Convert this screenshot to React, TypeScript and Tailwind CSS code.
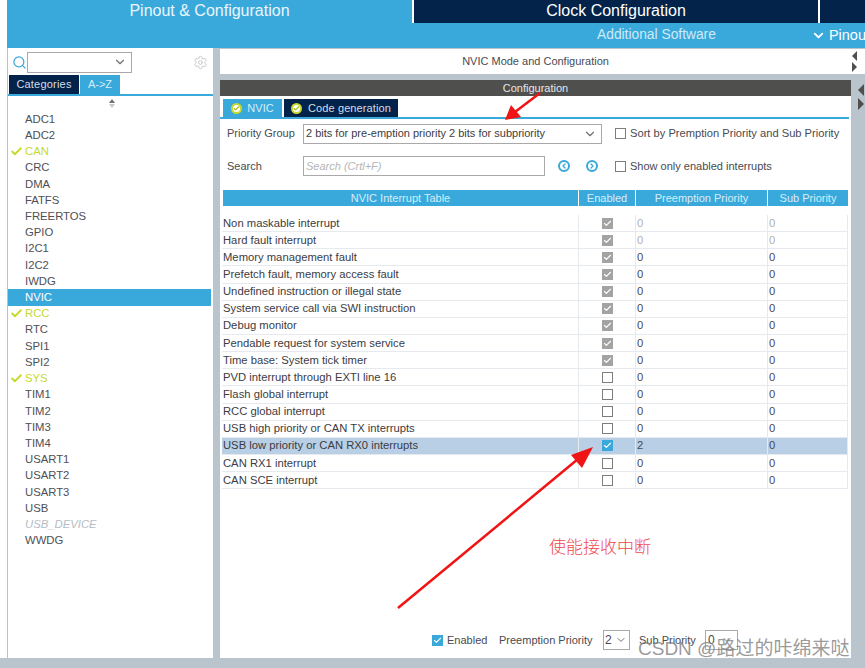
import { ChevronDown, Check, Search, Settings } from "lucide-react";

const peripherals = [
  { name: "ADC1" }, { name: "ADC2" }, { name: "CAN", on: true }, { name: "CRC" }, { name: "DMA" },
  { name: "FATFS" }, { name: "FREERTOS" }, { name: "GPIO" }, { name: "I2C1" }, { name: "I2C2" },
  { name: "IWDG" }, { name: "NVIC", active: true }, { name: "RCC", on: true }, { name: "RTC" },
  { name: "SPI1" }, { name: "SPI2" }, { name: "SYS", on: true }, { name: "TIM1" }, { name: "TIM2" },
  { name: "TIM3" }, { name: "TIM4" }, { name: "USART1" }, { name: "USART2" }, { name: "USART3" },
  { name: "USB" }, { name: "USB_DEVICE", disabled: true }, { name: "WWDG" },
];

const interrupts = [
  { name: "Non maskable interrupt", locked: true, fixed: true },
  { name: "Hard fault interrupt", locked: true, fixed: true },
  { name: "Memory management fault", locked: true },
  { name: "Prefetch fault, memory access fault", locked: true },
  { name: "Undefined instruction or illegal state", locked: true },
  { name: "System service call via SWI instruction", locked: true },
  { name: "Debug monitor", locked: true },
  { name: "Pendable request for system service", locked: true },
  { name: "Time base: System tick timer", locked: true },
  { name: "PVD interrupt through EXTI line 16" },
  { name: "Flash global interrupt" },
  { name: "RCC global interrupt" },
  { name: "USB high priority or CAN TX interrupts" },
  { name: "USB low priority or CAN RX0 interrupts", selected: true },
  { name: "CAN RX1 interrupt" },
  { name: "CAN SCE interrupt" },
];

function Box({ state }: { state: "off" | "on" | "locked" }) {
  if (state === "off") return <span className="block w-[11px] h-[11px] border border-[#7d7d7d] bg-white" />;
  return (
    <span className={`flex items-center justify-center w-[11px] h-[11px] ${state === "on" ? "bg-[#39a9dc]" : "bg-[#a3a3a3]"}`}>
      <Check size={9} strokeWidth={3} className="text-white" />
    </span>
  );
}

function TabDot() {
  return (
    <span className="flex items-center justify-center w-[11px] h-[11px] rounded-full bg-white border-2 border-[#c6d92e]">
      <Check size={7} strokeWidth={4} className="text-[#a8bc14]" />
    </span>
  );
}

function Sidebar() {
  return (
    <div className="w-[205px] ml-px bg-white flex flex-col shrink-0">
      <div className="flex items-center h-[24px] mt-[2px] pl-[4px] pr-[5px]">
        <Search size={15} strokeWidth={2} className="text-[#39a9dc]" />
        <div className="w-[105px] h-[21px] border border-[#a9a9a9] flex items-center justify-end pr-[4px]">
          <ChevronDown size={14} className="text-[#707070]" />
        </div>
        <Settings size={15} strokeWidth={1.5} className="ml-auto text-[#c4c4c4]" />
      </div>
      <div className="flex h-[19px] mt-[1px] pl-px gap-px border-b-2 border-[#39a9dc] box-content">
        <div className="w-[70px] bg-[#03234b] text-[#d5dde5] text-[11px] tracking-[0.2px] flex items-center justify-center">Categories</div>
        <div className="w-[40px] bg-[#39a9dc] text-[#d5eefa] text-[11px] flex items-center justify-center">A-&gt;Z</div>
      </div>
      <div className="h-[14px] flex flex-col items-center justify-center pl-[2px] gap-px">
        <span className="w-0 h-0 border-x-[3px] border-x-transparent border-b-[4px] border-b-[#707070]" />
        <span className="w-0 h-0 border-x-[3px] border-x-transparent border-t-[4px] border-t-[#c8c8c8]" />
      </div>
      <div className="mt-px mr-[2px]">
        {peripherals.map((p) => (
          <div
            key={p.name}
            className={`h-[16.23px] flex items-center pl-[17px] text-[11.3px] ${
              p.active ? "bg-[#39a9dc] text-white" : p.on ? "text-[#c6d92e]" : p.disabled ? "text-[#b5bcc4] italic" : "text-[#4f4f55]"
            }`}
          >
            {p.on && <Check size={13} strokeWidth={3.5} className="text-[#c6d92e] -ml-[15px] mr-[2px] shrink-0" />}
            <span>{p.name}</span>
          </div>
        ))}
      </div>
    </div>
  );
}

function ConfigPanel() {
  return (
    <div className="flex-1 flex flex-col bg-white text-[11px] text-[#4a4a50]">
      <div className="flex h-[18px] mt-[3px] pl-[3px] gap-[2px]">
        <div className="w-[59px] bg-[#39a9dc] text-[#d5eefa] flex items-center justify-center gap-[5px]"><TabDot />NVIC</div>
        <div className="w-[114px] bg-[#03234b] text-[#d5dde5] flex items-center justify-center gap-[6px] tracking-[0.1px]"><TabDot />Code generation</div>
      </div>
      <div className="h-[2px] bg-[#39a9dc] mr-[2px]" />

      <div className="flex items-center h-[27px] mt-[1px] pl-[7px]">
        <span className="w-[76px]">Priority Group</span>
        <div className="w-[299px] h-[20px] border border-[#a9a9a9] flex items-center justify-between pl-[2px] pr-[4px] text-[#3c3c42]">
          2 bits for pre-emption priority 2 bits for subpriority
          <ChevronDown size={14} className="text-[#707070]" />
        </div>
        <span className="ml-[13px] mr-[4px]"><Box state="off" /></span>
        <span className="text-[11.15px]">Sort by Premption Priority and Sub Priority</span>
      </div>
      <div className="flex items-center h-[22px] mt-[8px] pl-[7px]">
        <span className="w-[76px]">Search</span>
        <div className="w-[242px] h-[20px] border border-[#a9a9a9] flex items-center pl-[2px] italic text-[#b5b5b5]">Search (Crtl+F)</div>
        <span className="ml-[13px] w-[12px] h-[12px] rounded-full border-2 border-[#39a9dc] flex items-center justify-center text-[#39a9dc]">
          <ChevronDown size={8} strokeWidth={4} className="rotate-90" />
        </span>
        <span className="ml-[16px] w-[12px] h-[12px] rounded-full border-2 border-[#39a9dc] flex items-center justify-center text-[#39a9dc]">
          <ChevronDown size={8} strokeWidth={4} className="-rotate-90" />
        </span>
        <span className="ml-[17px] mr-[4px]"><Box state="off" /></span>
        <span>Show only enabled interrupts</span>
      </div>

      <div className="flex h-[16px] mt-[13px] ml-[3px] mr-[2px] gap-px text-[#d5eefa] w-[625px]">
        <div className="w-[355px] bg-[#39a9dc] flex items-center justify-center">NVIC Interrupt Table</div>
        <div className="w-[56px] bg-[#39a9dc] flex items-center justify-center">Enabled</div>
        <div className="w-[131px] bg-[#39a9dc] flex items-center justify-center">Preemption Priority</div>
        <div className="flex-1 bg-[#39a9dc] flex items-center justify-center">Sub Priority</div>
      </div>

      <div className="mt-[9px] ml-[2px] w-[626px] border-r border-[#e6e9ed]">
        {interrupts.map((row) => (
          <div
            key={row.name}
            className={`flex items-center h-[17.15px] border-b border-[#e6e9ed] text-[11.25px] ${row.selected ? "bg-[#b8cfe5]" : ""}`}
          >
            <div className="w-[356px] pl-px whitespace-nowrap text-[#3c3c42]">{row.name}</div>
            <div className="w-[57px] h-full border-l border-[#e6e9ed] flex items-center justify-center">
              <Box state={row.locked ? "locked" : row.selected ? "on" : "off"} />
            </div>
            <div className={`w-[132px] h-full border-l border-[#e6e9ed] pl-[1px] flex items-center ${row.fixed ? "text-[#b0b0b0]" : ""}`}>
              {row.selected ? "2" : "0"}
            </div>
            <div className={`flex-1 h-full border-l border-[#e6e9ed] pl-[1px] flex items-center ${row.fixed ? "text-[#b0b0b0]" : ""}`}>0</div>
          </div>
        ))}
      </div>

      <div className="mt-auto mb-[7px] flex items-center h-[22px] pl-[212px] whitespace-nowrap">
        <Box state="on" />
        <span className="ml-[4px] w-[41px]">Enabled</span>
        <span className="ml-[11px] w-[95px]">Preemption Priority</span>
        <div className="ml-[9px] w-[27px] h-[20px] border border-[#a9a9a9] flex items-center justify-between pl-[1px] pr-[2px] text-[12px]">
          2<ChevronDown size={12} className="text-[#707070]" />
        </div>
        <span className="ml-[9px] w-[58px]">Sub Priority</span>
        <div className="ml-[8px] w-[33px] h-[20px] border border-[#a9a9a9] flex items-center justify-between pl-[2px] pr-[4px] text-[12px]">
          0<ChevronDown size={12} className="text-[#707070]" />
        </div>
      </div>
    </div>
  );
}

export default function App() {
  return (
    <div className="relative w-[865px] h-[668px] overflow-hidden bg-white font-['Liberation_Sans',Arial,sans-serif]">
      <div className="flex flex-col h-full pl-[7px]">
        {/* top tabs */}
        <div className="flex h-[23px] bg-white gap-[2px] shrink-0 text-white text-[16px]">
          <div className="w-[405px] bg-[#39a9dc] flex items-center justify-center pb-[2px] text-[#eaf6fc]">Pinout &amp; Configuration</div>
          <div className="w-[404px] bg-[#03234b] flex items-center justify-center pb-[2px]">Clock Configuration</div>
          <div className="flex-1 bg-[#03234b]" />
        </div>
        <div className="flex h-[25px] bg-[#39a9dc] items-center shrink-0 text-[#cfeaf7] text-[13.8px] whitespace-nowrap">
          <span className="ml-[590px]">Additional Software</span>
          <ChevronDown size={15} strokeWidth={3} className="ml-[95px] text-white shrink-0" />
          <span className="ml-[3px] text-white text-[14.5px]">Pinout</span>
        </div>

        <div className="flex-1 flex bg-[#b9c4cc] min-h-0 mb-[10px]">
          <Sidebar />
          <div className="w-[7px] shrink-0" />
          <div className="flex-1 flex flex-col min-w-0">
            <div className="flex h-[25px] mt-px shrink-0">
              <div className="w-[631px] bg-white flex items-center justify-center text-[11px] text-[#4a4a50]">NVIC Mode and Configuration</div>
              <div className="flex-1 bg-white flex flex-col items-start justify-center gap-[1px] pl-[1px]">
                <span className="w-0 h-0 border-y-[5px] border-y-transparent border-r-[5px] border-r-[#4f4f4d]" />
                <span className="w-0 h-0 border-y-[5px] border-y-transparent border-l-[5px] border-l-[#4f4f4d]" />
              </div>
            </div>
            <div className="flex flex-1 mt-[6px] min-h-0">
              <div className="w-[631px] flex flex-col">
                <div className="h-[16px] bg-[#4f4f4d] text-[#e6e6e6] text-[11px] flex items-center justify-center shrink-0">Configuration</div>
                <ConfigPanel />
              </div>
              <div className="flex-1 flex flex-col items-end pr-px gap-[2px] pt-[4px]">
                <span className="w-0 h-0 border-y-[6px] border-y-transparent border-r-[6px] border-r-[#4f4f4d]" />
                <span className="w-0 h-0 border-y-[6px] border-y-transparent border-l-[6px] border-l-[#4f4f4d]" />
              </div>
            </div>
          </div>
        </div>
      </div>
      <div className="absolute left-0 right-0 bottom-0 h-[10px] bg-[#b9c4cc]" />

      {/* annotations drawn over the screenshot */}
      <svg className="absolute inset-0 pointer-events-none" width="865" height="668">
        <line x1="540" y1="93" x2="515" y2="112" stroke="#f01414" strokeWidth="2.5" />
        <polygon points="505,120 511,105 521,117" fill="#f01414" />
        <line x1="398" y1="608" x2="578" y2="459" stroke="#f01414" strokeWidth="2.5" />
        <polygon points="593,447 571,455 582,468" fill="#f01414" />
      </svg>
      <div className="absolute left-[549px] top-[536px] text-[17px] leading-[20px] text-[#f0484c] font-['Noto_Sans_CJK_SC',sans-serif] font-light">使能接收中断</div>
      <div className="absolute left-[638px] top-[638px] text-[19px] leading-[22px] text-[#808080]/80 font-['Liberation_Sans','Noto_Sans_CJK_SC',sans-serif] whitespace-nowrap">CSDN @路过的咔绵来哒</div>
    </div>
  );
}
